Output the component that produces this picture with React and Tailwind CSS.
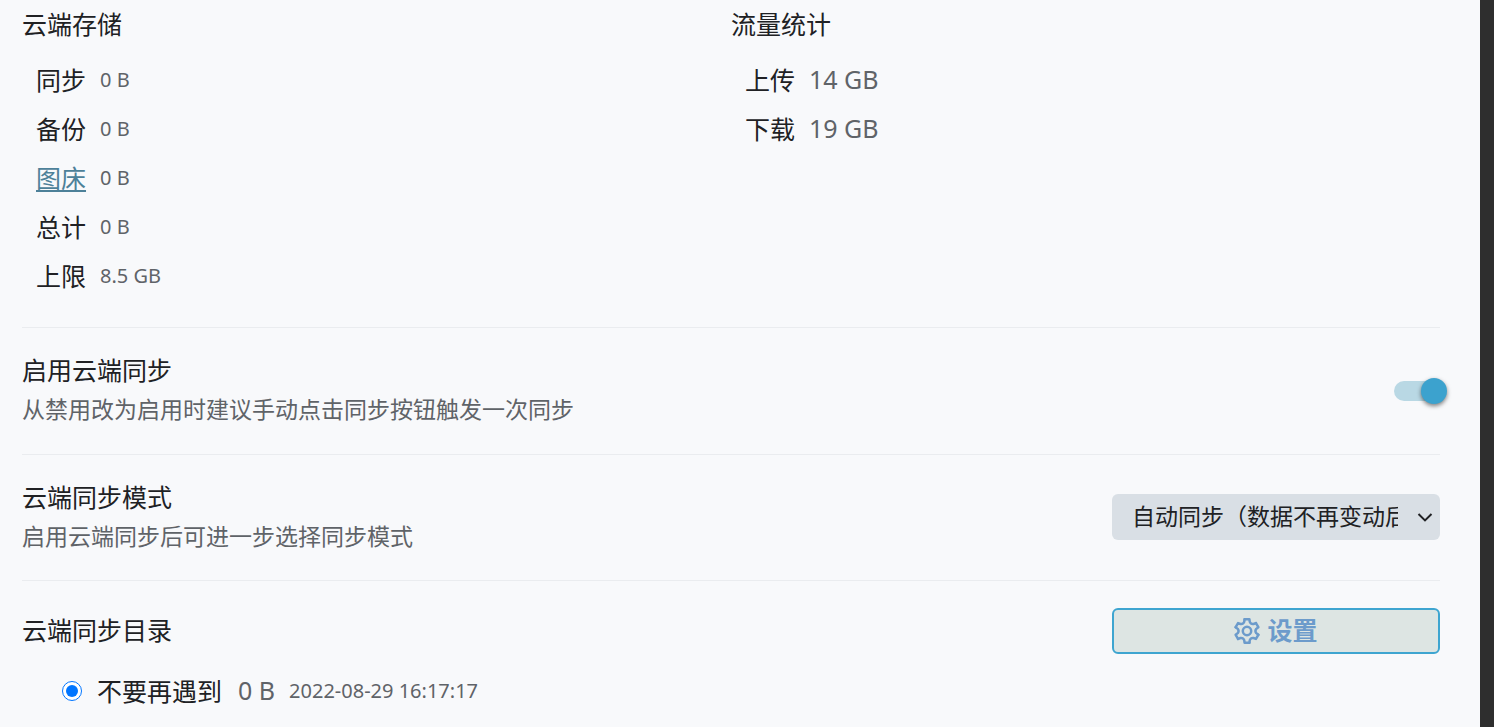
import { useState } from "react";

const storage = [
  { label: "同步", value: "0 B" },
  { label: "备份", value: "0 B" },
  { label: "图床", value: "0 B", link: true },
  { label: "总计", value: "0 B" },
  { label: "上限", value: "8.5 GB" },
];

const traffic = [
  { label: "上传", value: "14 GB" },
  { label: "下载", value: "19 GB" },
];

const gearTeeth = [0, 60, 120, 180, 240, 300];

function GearIcon() {
  return (
    <svg
      className="size-[26px] shrink-0"
      viewBox="0 0 26 26"
      fill="none"
      stroke="currentColor"
      strokeWidth="2.5"
      strokeLinejoin="round"
      strokeLinecap="round"
      aria-hidden="true"
    >
      {gearTeeth.map((angle) => (
        <path
          key={angle}
          d="M10.6 1.3H15.4L15.8 3.9Q16.8 6.42 19.48 6.03L21.93 5.07"
          transform={`rotate(${angle} 13 13)`}
        />
      ))}
      <circle cx="13" cy="13" r="4.2" />
    </svg>
  );
}

function Stats({ title, items, valueClass }) {
  return (
    <section className="flex-1">
      <h2 className="leading-8">{title}</h2>
      <dl className="mt-4 pl-[14px]">
        {items.map((item) => (
          <div key={item.label} className="flex h-[49px] items-center gap-[14px]">
            <dt>
              {item.link ? (
                <a href="#images" className="text-[#4d8199] underline underline-offset-2">
                  {item.label}
                </a>
              ) : (
                item.label
              )}
            </dt>
            <dd className={valueClass}>{item.value}</dd>
          </div>
        ))}
      </dl>
    </section>
  );
}

export default function App() {
  const [enabled, setEnabled] = useState(true);
  return (
    <div className="flex min-h-screen bg-[#2e2e2e] font-['Noto_Sans_CJK_SC',sans-serif] text-[25px] text-[#202124]">
      <main className="mr-[14px] flex-1 bg-[#f8f9fb] pt-[7px] pr-10 pl-[22px]">
        <div className="flex pb-[27px]">
          <Stats
            title="云端存储"
            items={storage}
            valueClass="font-['Noto_Sans',sans-serif] text-xl text-[#5f6368]"
          />
          <Stats
            title="流量统计"
            items={traffic}
            valueClass="font-['Noto_Sans',sans-serif] text-[#5f6368]"
          />
        </div>

        <div className="flex h-[127px] items-center justify-between border-t border-[#eaecef]">
          <label htmlFor="enable-sync" className="pb-1">
            <span className="block leading-[39px]">启用云端同步</span>
            <span className="block text-[23px] leading-[39px] text-[#5f6368]">
              从禁用改为启用时建议手动点击同步按钮触发一次同步
            </span>
          </label>
          <input
            id="enable-sync"
            type="checkbox"
            role="switch"
            checked={enabled}
            onChange={(e) => setEnabled(e.target.checked)}
            className="relative h-5 w-[46px] appearance-none rounded-full bg-[#c8cdd1] before:absolute before:-top-[3px] before:-left-1 before:size-[26px] before:rounded-full before:bg-white before:shadow-[0_2px_4px_rgba(0,0,0,0.5)] checked:bg-[#b9d8e4] checked:before:left-[27px] checked:before:bg-[#3ca2ce]"
          />
        </div>

        <div className="flex h-[126px] items-center justify-between border-t border-[#eaecef]">
          <label htmlFor="sync-mode" className="pb-1">
            <span className="block leading-[39px]">云端同步模式</span>
            <span className="block text-[23px] leading-[39px] text-[#5f6368]">
              启用云端同步后可进一步选择同步模式
            </span>
          </label>
          <div className="relative mb-[2px] w-[328px]">
            <select
              id="sync-mode"
              className="block h-[46px] w-full appearance-none rounded-md bg-[#d9dfe5] pr-[42px] pb-[2px] pl-5 text-[23px]"
            >
              <option>自动同步（数据不再变动后）</option>
            </select>
            <svg
              className="pointer-events-none absolute top-4 right-[7px] h-[14px] w-4"
              viewBox="0 0 16 14"
              fill="none"
              stroke="currentColor"
              strokeWidth="2"
              aria-hidden="true"
            >
              <path d="M1.5 4 8 10.4 14.5 4" />
            </svg>
          </div>
        </div>

        <section className="border-t border-[#eaecef] pt-[27px]">
          <div className="flex items-center justify-between">
            <h2 className="pb-[2px]">云端同步目录</h2>
            <button
              type="button"
              className="flex h-[46px] w-[328px] items-center justify-center gap-[7px] rounded-md border-2 border-[#3ea5d0] bg-[#dde5e3] font-bold text-[#6c9bcb]"
            >
              <GearIcon />
              <span className="pb-[2px]">设置</span>
            </button>
          </div>
          <label className="mt-3 flex h-[50px] items-center pl-10">
            <input type="radio" name="directory" defaultChecked className="size-5" />
            <span className="ml-[15px]">不要再遇到</span>
            <span className="ml-4 font-['Noto_Sans',sans-serif] text-[#5f6368]">0 B</span>
            <time className="ml-[14px] font-['Noto_Sans',sans-serif] text-xl text-[#5f6368]">
              2022-08-29 16:17:17
            </time>
          </label>
        </section>
      </main>
    </div>
  );
}
